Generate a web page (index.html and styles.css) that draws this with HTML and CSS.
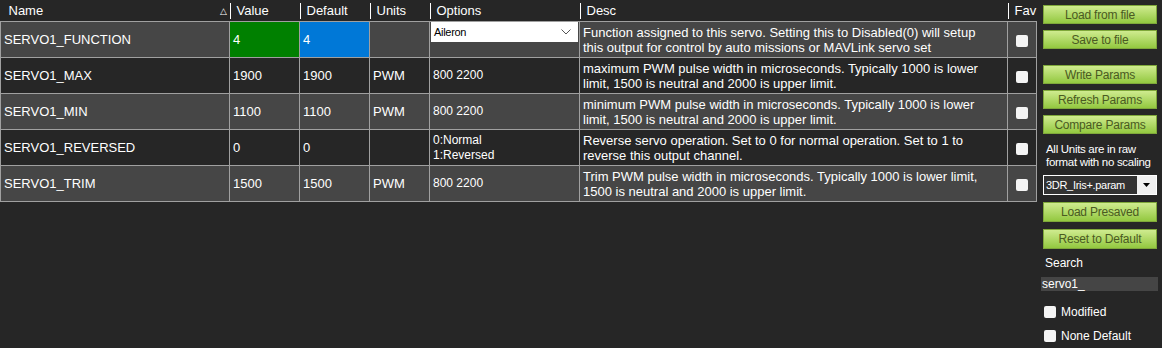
FILE: index.html
```html
<!DOCTYPE html>
<html lang="en">
<head>
    <meta charset="UTF-8">
    <meta name="viewport" content="width=device-width, initial-scale=1.0">
    <title>Full Parameter List</title>
    <link rel="stylesheet" href="styles.css">
</head>
<body>
    <div class="screen">
        <!-- Parameter grid -->
        <table class="grid">
            <colgroup>
                <col class="c-name">
                <col class="c-value">
                <col class="c-default">
                <col class="c-units">
                <col class="c-options">
                <col class="c-desc">
                <col class="c-fav">
            </colgroup>
            <thead>
                <tr>
                    <th><div class="hd first">Name <span class="sort">&#9651;</span></div></th>
                    <th><div class="hd">Value</div></th>
                    <th><div class="hd">Default</div></th>
                    <th><div class="hd">Units</div></th>
                    <th><div class="hd">Options</div></th>
                    <th><div class="hd">Desc</div></th>
                    <th><div class="hd">Fav</div></th>
                </tr>
            </thead>
            <tbody>
                <tr class="light">
                    <td>SERVO1_FUNCTION</td>
                    <td class="changed">4</td>
                    <td class="isdefault">4</td>
                    <td></td>
                    <td class="opt-top">
                        <div class="combo">
                            <span>Aileron</span>
                            <svg width="10" height="6" viewBox="0 0 10 6"><path d="M0.5 0.5 L5 5 L9.5 0.5" fill="none" stroke="#555" stroke-width="1"/></svg>
                        </div>
                    </td>
                    <td class="desc">Function assigned to this servo. Setting this to Disabled(0) will setup<br>this output for control by auto missions or MAVLink servo set</td>
                    <td class="fav"><span class="box"></span></td>
                </tr>
                <tr>
                    <td>SERVO1_MAX</td>
                    <td>1900</td>
                    <td>1900</td>
                    <td>PWM</td>
                    <td class="small">800 2200</td>
                    <td class="desc">maximum PWM pulse width in microseconds. Typically 1000 is lower<br>limit, 1500 is neutral and 2000 is upper limit.</td>
                    <td class="fav"><span class="box"></span></td>
                </tr>
                <tr class="light">
                    <td>SERVO1_MIN</td>
                    <td>1100</td>
                    <td>1100</td>
                    <td>PWM</td>
                    <td class="small">800 2200</td>
                    <td class="desc">minimum PWM pulse width in microseconds. Typically 1000 is lower<br>limit, 1500 is neutral and 2000 is upper limit.</td>
                    <td class="fav"><span class="box"></span></td>
                </tr>
                <tr>
                    <td>SERVO1_REVERSED</td>
                    <td>0</td>
                    <td>0</td>
                    <td></td>
                    <td class="small">0:Normal<br>1:Reversed</td>
                    <td class="desc">Reverse servo operation. Set to 0 for normal operation. Set to 1 to<br>reverse this output channel.</td>
                    <td class="fav"><span class="box"></span></td>
                </tr>
                <tr class="light">
                    <td>SERVO1_TRIM</td>
                    <td>1500</td>
                    <td>1500</td>
                    <td>PWM</td>
                    <td class="small">800 2200</td>
                    <td class="desc">Trim PWM pulse width in microseconds. Typically 1000 is lower limit,<br>1500 is neutral and 2000 is upper limit.</td>
                    <td class="fav"><span class="box"></span></td>
                </tr>
            </tbody>
        </table>

        <!-- Side panel -->
        <div class="panel">
            <button class="btn">Load from file</button>
            <button class="btn">Save to file</button>
            <button class="btn gap">Write Params</button>
            <button class="btn">Refresh Params</button>
            <button class="btn">Compare Params</button>
            <p class="note">All Units are in raw<br>format with no scaling</p>
            <div class="select">
                <span class="sel-text">3DR_Iris+.param</span>
                <span class="sel-arrow"><svg width="7" height="4" viewBox="0 0 7 4"><path d="M0 0 H7 L3.5 4 Z" fill="#000"/></svg></span>
            </div>
            <button class="btn tall">Load Presaved</button>
            <button class="btn tall">Reset to Default</button>
            <label class="search-label">Search</label>
            <div class="search">servo1_</div>
            <div class="check"><span class="box"></span>Modified</div>
            <div class="check"><span class="box"></span>None Default</div>
        </div>
    </div>
</body>
</html>
```

FILE: styles.css
```css
body {
    margin: 0;
    background-color: #262626;
    color: #fff;
    font-family: "Liberation Sans", Arial, sans-serif;
    font-size: 13px;
}
.screen {
    display: flex;
    align-items: flex-start;
    height: 348px;
    overflow: hidden;
}
.grid {
    width: 1036px;
    table-layout: fixed;
    border-collapse: collapse;
    flex-shrink: 0;
}
.c-name { width: 229px; }
.c-value { width: 70px; }
.c-default { width: 70px; }
.c-units { width: 60px; }
.c-options { width: 150px; }
.c-desc { width: 428px; }
.c-fav { width: 29px; }

.grid th {
    background: #262626;
    font-weight: normal;
    text-align: left;
    padding: 3px 0 2px 0;
    height: 16px;
    border-bottom: 1px solid #a0a0a0;
}
.hd {
    border-left: 1px solid #fff;
    padding-left: 6px;
    line-height: 16px;
    white-space: nowrap;
    overflow: hidden;
}
.hd.first {
    border-left: none;
    padding-left: 8px;
    display: flex;
}
.sort {
    margin-left: auto;
    margin-right: 3px;
    font-size: 9px;
}
.grid td {
    height: 36px;
    padding: 0 3px;
    border: 1px solid #a0a0a0;
    box-sizing: border-box;
    white-space: nowrap;
    overflow: hidden;
    background: #262626;
}
.grid tr.light td {
    background: #464646;
}
.grid tr.light td.changed {
    background: #008000;
}
.grid tr.light td.isdefault {
    background: #0078d7;
}
.grid td.desc {
    line-height: 15px;
    padding-top: 0;
}
.grid td.small {
    font-size: 12px;
    line-height: 15px;
}
.grid td.opt-top {
    vertical-align: top;
    padding: 0 1px;
}
.combo {
    display: flex;
    align-items: center;
    justify-content: space-between;
    height: 20px;
    background: #fff;
    color: #000;
    font-size: 11px;
    letter-spacing: -0.3px;
    padding: 0 7px 0 3px;
}
.grid td.fav {
    text-align: center;
    padding: 0;
}
.box {
    display: inline-block;
    width: 12px;
    height: 12px;
    background: #f4f4f4;
    border-radius: 2px;
    vertical-align: middle;
}

.panel {
    width: 114px;
    margin-left: 6px;
    padding-top: 5px;
    display: flex;
    flex-direction: column;
    font-size: 12px;
}
.btn {
    height: 19px;
    margin-bottom: 6px;
    padding: 0;
    border: 1px solid #7fa83a;
    background: linear-gradient(#cfeb8f, #93c840);
    color: #4a5a22;
    font-family: "Liberation Sans", Arial, sans-serif;
    font-size: 12px;
    letter-spacing: -0.2px;
    cursor: pointer;
}
.btn.gap {
    margin-top: 10px;
}
.btn.tall {
    height: 20px;
    margin-bottom: 7px;
}
.note {
    margin: 3px 0 6px 3px;
    line-height: 13px;
    font-size: 11.5px;
    letter-spacing: -0.3px;
    white-space: nowrap;
}
.select {
    display: flex;
    height: 20px;
    border: 1px solid #fff;
    box-sizing: border-box;
    background: #333;
    margin-bottom: 7px;
}
.sel-text {
    flex: 1;
    line-height: 18px;
    padding-left: 2px;
    font-size: 11px;
    letter-spacing: -0.3px;
    white-space: nowrap;
    overflow: hidden;
}
.sel-arrow {
    width: 19px;
    background: #f0f0f0;
    display: flex;
    align-items: center;
    justify-content: center;
}
.search-label {
    margin: 0 0 7px 2px;
}
.search {
    height: 14px;
    margin-left: -2px;
    margin-right: -1px;
    padding-left: 1px;
    background: #454545;
    line-height: 14px;
    margin-bottom: 14px;
}
.check {
    display: flex;
    align-items: center;
    gap: 5px;
    margin-left: 1px;
    height: 13px;
    margin-bottom: 11px;
}
```
